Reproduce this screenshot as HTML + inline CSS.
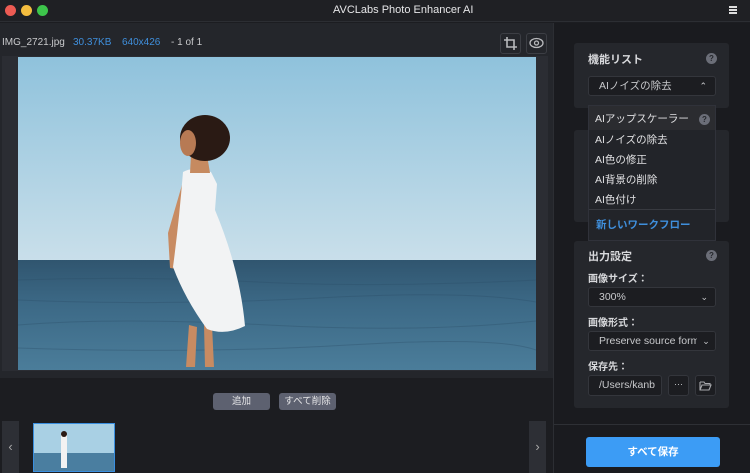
<!DOCTYPE html>
<html><head><meta charset="utf-8"><style>
*{margin:0;padding:0;box-sizing:border-box}
body{width:750px;height:473px;background:#1c1d21;font-family:"Liberation Sans","Noto Sans CJK JP",sans-serif;color:#d8d9dc;position:relative;overflow:hidden;font-size:11px}
.a{position:absolute}
.card{position:absolute;background:#25272c;border-radius:3px}
.sel{position:absolute;background:#1c1d21;border:1px solid #34363c;border-radius:3px;color:#c8c9cc;font-size:10.5px;line-height:18px;padding-left:10px}
.q{position:absolute;width:11px;height:11px;border-radius:50%;background:#6b6e78;color:#25272c;font-size:8px;font-weight:bold;text-align:center;line-height:11px}
.lbl{position:absolute;font-size:10px;color:#d8d9dc;font-weight:bold}
</style></head><body>
<div class="a" style="left:0;top:0;width:750px;height:22px;background:#1f2024;border-bottom:1px solid #2c2e33"></div>
<div class="a" style="left:5px;top:5px;width:11px;height:11px;border-radius:50%;background:#ed5b53"></div>
<div class="a" style="left:21px;top:5px;width:11px;height:11px;border-radius:50%;background:#f4bd3f"></div>
<div class="a" style="left:37px;top:5px;width:11px;height:11px;border-radius:50%;background:#3dc54b"></div>
<div class="a" style="left:333px;top:4px;font-size:11px;color:#e6e6e8">AVCLabs Photo Enhancer AI</div>
<div class="a" style="left:729px;top:6px;width:8px;height:2px;background:#ddd;box-shadow:0 3px 0 #ddd,0 6px 0 #ddd"></div>
<div class="a" style="left:0;top:23px;width:553px;height:355px;background:#24262b"></div>
<div class="a" style="left:2px;top:37px;font-size:10px;color:#c9cacc">IMG_2721.jpg</div>
<div class="a" style="left:73px;top:37px;font-size:10px;color:#3f8fdc">30.37KB</div>
<div class="a" style="left:122px;top:37px;font-size:10px;color:#3f8fdc">640x426</div>
<div class="a" style="left:171px;top:37px;font-size:10px;color:#c9cacc">- 1 of 1</div>
<div class="a" style="left:500px;top:33px;width:21px;height:21px;border:1px solid #3c3e44;border-radius:3px"></div>
<svg class="a" style="left:503px;top:36px" width="15" height="15" viewBox="0 0 15 15"><path d="M4 1v10h10M1 4h10v10" fill="none" stroke="#b8b9bc" stroke-width="1.6"/></svg>
<div class="a" style="left:526px;top:33px;width:21px;height:21px;border:1px solid #3c3e44;border-radius:3px"></div>
<svg class="a" style="left:529px;top:37px" width="15" height="12" viewBox="0 0 15 12"><ellipse cx="7.5" cy="6" rx="6.5" ry="4.5" fill="none" stroke="#b8b9bc" stroke-width="1.3"/><circle cx="7.5" cy="6" r="2" fill="none" stroke="#b8b9bc" stroke-width="1.3"/></svg>
<div class="a" style="left:2px;top:56px;width:546px;height:315px;background:#2b2d33"></div>
<svg class="a" style="left:18px;top:57px" width="518" height="313" viewBox="18 57 518 313">
<defs>
<linearGradient id="sky" x1="0" y1="0" x2="0" y2="1"><stop offset="0" stop-color="#8fc2dc"/><stop offset="1" stop-color="#c9dfea"/></linearGradient>
<linearGradient id="sea" x1="0" y1="0" x2="0" y2="1"><stop offset="0" stop-color="#30556f"/><stop offset=".4" stop-color="#3c6986"/><stop offset="1" stop-color="#4b7d9a"/></linearGradient>
</defs>
<rect x="18" y="57" width="518" height="204" fill="url(#sky)"/>
<rect x="18" y="260" width="518" height="110" fill="url(#sea)"/>
<g stroke="#2c4d66" stroke-width="1" opacity=".35" fill="none">
<path d="M18 280q120 -4 240 2t278 -2M18 300q150 6 300 -2t218 4M18 325q100 -8 250 0t268 -4M18 348q180 6 330 -3t188 5"/></g>
<path d="M189 325l-3 42h9l2-40zM204 325l1 42h9l-2-42z" fill="#c88b62"/>
<path d="M184 178l-16 55 2 35 7 1 6-60zM212 182l5 55-3 12z" fill="#c88b62"/>
<path d="M183 172q10-6 28 0l6 12-2 26q25 60 30 116q-20 10-38 3q-22-30-34-62q6-45 10-95z" fill="#f2f3f4"/>
<path d="M191 155h16l3 18h-20z" fill="#c68a60"/>
<ellipse cx="205" cy="138" rx="25" ry="23" fill="#2a1a14"/>
<ellipse cx="188" cy="143" rx="8" ry="13" fill="#b77a54"/>
</svg>
<div class="a" style="left:0;top:378px;width:553px;height:95px;background:#1c1d21"></div>
<div class="a" style="left:213px;top:393px;width:57px;height:17px;background:#5d6170;border-radius:3px;color:#e6e6e8;font-size:9.5px;text-align:center;line-height:17px">追加</div>
<div class="a" style="left:279px;top:393px;width:57px;height:17px;background:#5d6170;border-radius:3px;color:#e6e6e8;font-size:9.5px;text-align:center;line-height:17px">すべて削除</div>
<div class="a" style="left:2px;top:421px;width:17px;height:52px;background:#2d2f35;color:#aaa;font-size:13px;text-align:center;line-height:52px">‹</div>
<div class="a" style="left:529px;top:421px;width:17px;height:52px;background:#2d2f35;color:#aaa;font-size:13px;text-align:center;line-height:52px">›</div>
<svg class="a" style="left:33px;top:423px" width="82" height="49" viewBox="0 0 82 49"><rect width="82" height="49" fill="#4a7ea0"/><rect width="82" height="30" fill="#a9d0e4"/><rect x="28" y="12" width="6" height="33" fill="#f2f2f2"/><circle cx="31" cy="11" r="3" fill="#2a1a14"/><rect x="0.5" y="0.5" width="81" height="48" fill="none" stroke="#3a8fe0"/></svg>
<div class="a" style="left:553px;top:23px;width:197px;height:450px;background:#1a1b1f;border-left:1px solid #2c2e33"></div>
<div class="a" style="left:554px;top:424px;width:196px;height:1px;background:#2e3035"></div>
<div class="card" style="left:574px;top:43px;width:155px;height:65px"></div>
<div class="lbl" style="left:588px;top:51px;font-size:11px">機能リスト</div>
<div class="q" style="left:706px;top:53px">?</div>
<div class="sel" style="left:588px;top:76px;width:128px;height:20px">AIノイズの除去<span style="position:absolute;right:8px;top:0;font-size:9px">⌃</span></div>
<div class="card" style="left:574px;top:130px;width:155px;height:92px"></div>
<div class="a" style="left:588px;top:105px;width:128px;height:136px;background:#222429;border:1px solid #30323a"></div>
<div class="a" style="left:589px;top:106px;width:126px;height:24px;background:#2b2c30"></div>
<div class="a" style="left:595px;top:111px;font-size:10.5px;color:#e0e0e2">AIアップスケーラー</div>
<div class="q" style="left:699px;top:114px">?</div>
<div class="a" style="left:595px;top:132px;font-size:10.5px;color:#e0e0e2">AIノイズの除去</div>
<div class="a" style="left:595px;top:152px;font-size:10.5px;color:#e0e0e2">AI色の修正</div>
<div class="a" style="left:595px;top:172px;font-size:10.5px;color:#e0e0e2">AI背景の削除</div>
<div class="a" style="left:595px;top:192px;font-size:10.5px;color:#e0e0e2">AI色付け</div>
<div class="a" style="left:589px;top:209px;width:126px;height:1px;background:#383a40"></div>
<div class="a" style="left:596px;top:217px;font-size:10.5px;color:#3f8fdc;font-weight:bold">新しいワークフロー</div>
<div class="card" style="left:574px;top:241px;width:155px;height:167px"></div>
<div class="lbl" style="left:588px;top:248px;font-size:11px">出力設定</div>
<div class="q" style="left:706px;top:250px">?</div>
<div class="lbl" style="left:588px;top:270px">画像サイズ：</div>
<div class="sel" style="left:588px;top:287px;width:128px;height:20px">300%<span style="position:absolute;right:7px;top:0;font-size:9px">⌄</span></div>
<div class="lbl" style="left:588px;top:314px">画像形式：</div>
<div class="sel" style="left:588px;top:331px;width:128px;height:20px;white-space:nowrap;overflow:hidden">Preserve source format<span style="position:absolute;right:0;top:0;width:18px;background:#1c1d21;font-size:9px;text-align:center">⌄</span></div>
<div class="lbl" style="left:588px;top:358px">保存先：</div>
<div class="sel" style="left:588px;top:375px;width:74px;height:21px">/Users/kanb</div>
<div class="sel" style="left:668px;top:375px;width:21px;height:21px;padding:0;text-align:center;font-size:9px;line-height:16px">···</div>
<div class="sel" style="left:695px;top:375px;width:21px;height:21px;padding:0"></div>
<svg class="a" style="left:699px;top:380px" width="13" height="11" viewBox="0 0 13 11"><path d="M1 2h4l1 1.5h5v2M1 2v8h9l2-5H3L1 10" fill="none" stroke="#a8a9ad" stroke-width="1.1"/></svg>
<div class="a" style="left:586px;top:437px;width:134px;height:30px;background:#3c9cf5;border-radius:3px;color:#fff;font-size:10.5px;font-weight:bold;text-align:center;line-height:30px">すべて保存</div>
</body></html>
